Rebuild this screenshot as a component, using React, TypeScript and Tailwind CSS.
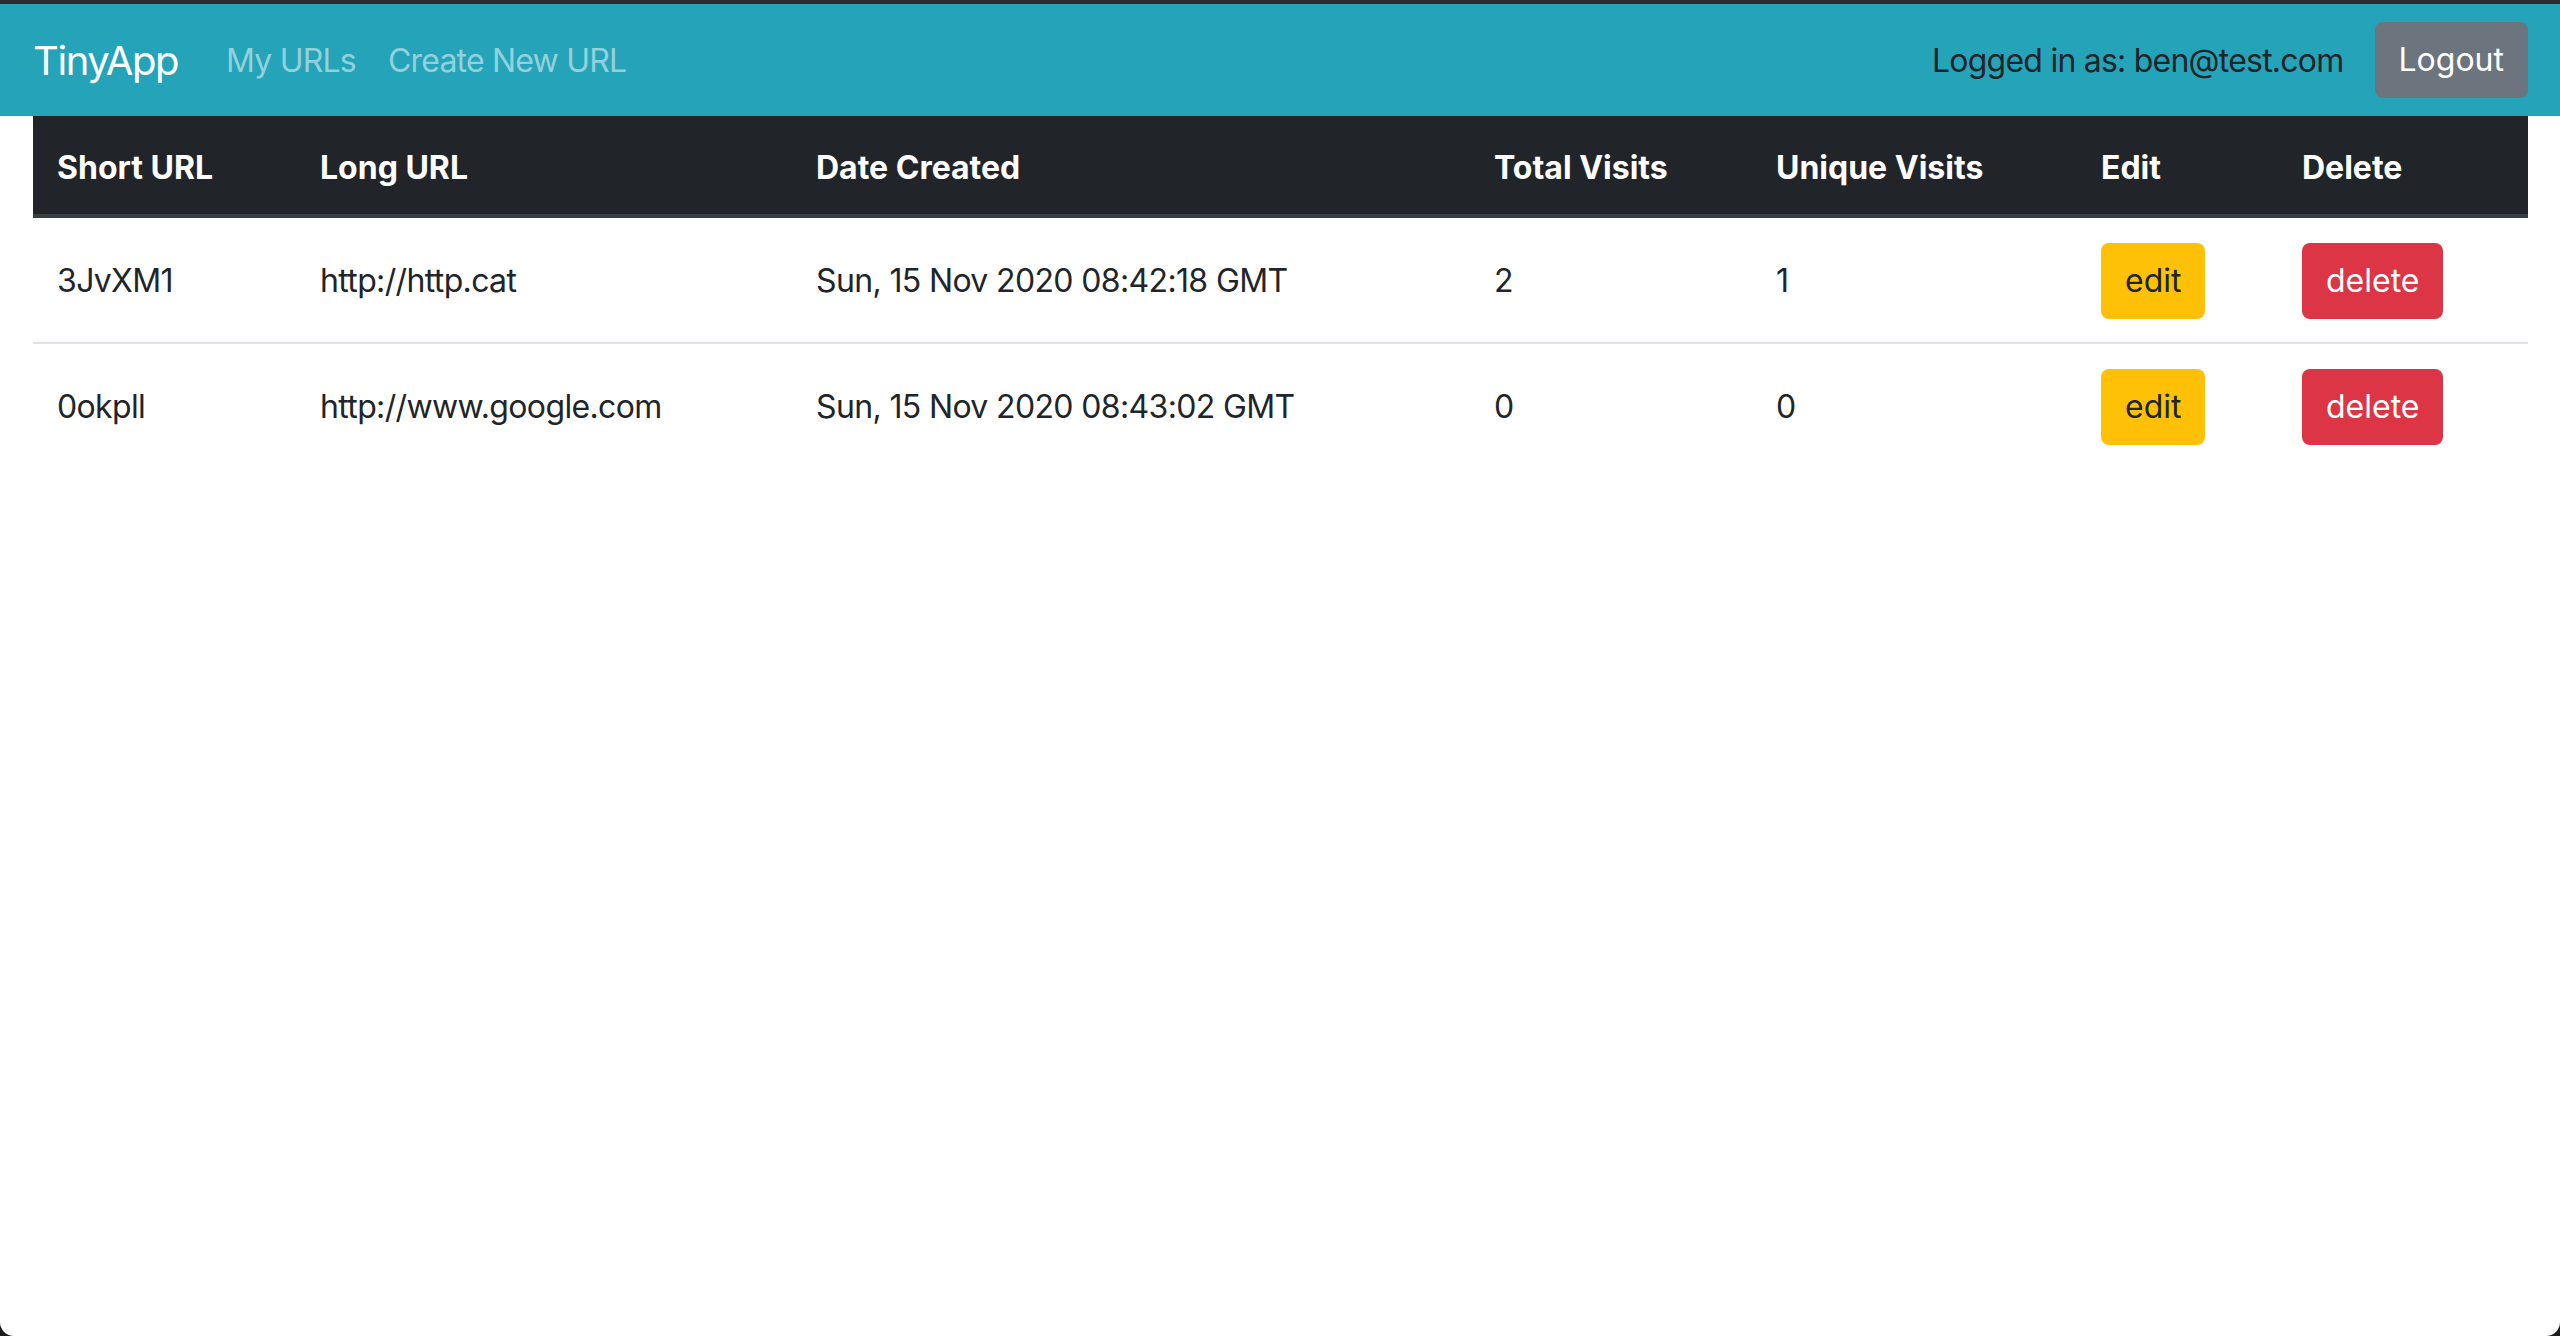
import React from "react";

const rows = [
  { short: "3JvXM1", long: "http://http.cat", date: "Sun, 15 Nov 2020 08:42:18 GMT", total: "2", unique: "1" },
  { short: "0okpll", long: "http://www.google.com", date: "Sun, 15 Nov 2020 08:43:02 GMT", total: "0", unique: "0" },
];

const widths = ["w-[263px]", "w-[496px]", "w-[678px]", "w-[282px]", "w-[325px]", "w-[201px]", "w-[250px]"];
const heads = ["Short URL", "Long URL", "Date Created", "Total Visits", "Unique Visits", "Edit", "Delete"];

export default function App() {
  return (
    <div className="h-[1336px] w-[2560px] bg-[#1c1c1e] overflow-hidden" style={{ fontFamily: "Inter, 'Liberation Sans', sans-serif" }}>
      <div className="h-full w-full bg-white rounded-b-[14px] overflow-hidden flex flex-col">
        <div className="h-[4px] bg-[#2b2b2b]" />
        <nav className="h-[112px] bg-[#25a3b9] flex items-center justify-between pl-[33px] pr-[32px] pt-[2px]">
          <div className="flex items-center">
            <span className="text-[40px] leading-[60px] text-white mr-[32px] tracking-[-0.035em]">TinyApp</span>
            <span className="text-[32px] leading-[48px] text-[#92d1dc] px-[16px] tracking-[-0.025em]">My URLs</span>
            <span className="text-[32px] leading-[48px] text-[#92d1dc] px-[16px] tracking-[-0.025em]">Create New URL</span>
          </div>
          <div className="flex items-center">
            <span className="text-[32px] leading-[48px] text-[#212529] mr-[31px] tracking-[-0.024em]">Logged in as: ben@test.com</span>
            <button className="h-[76px] px-[24px] rounded-[8px] bg-[#6c757d] text-white text-[32px] leading-[48px] -mt-[2px]">Logout</button>
          </div>
        </nav>
        <div className="pl-[33px] pr-[32px]">
          <table className="w-full table-fixed border-collapse text-[32px] leading-[48px] text-[#212529]">
            <colgroup>
              {widths.map((w, i) => (
                <col key={i} className={w} />
              ))}
            </colgroup>
            <thead>
              <tr className="bg-[#212529]">
                {heads.map((h) => (
                  <th key={h} className="text-left font-bold text-white px-[24px] pt-[26px] pb-[22px] border-t-[2px] border-t-[#212529] border-b-[4px] border-b-[#383d42]">
                    {h}
                  </th>
                ))}
              </tr>
            </thead>
            <tbody>
              {rows.map((r, i) => (
                <tr key={r.short} className={i > 0 ? "border-t-[2px] border-t-[#dee2e6]" : ""}>
                  <td className="px-[24px] pt-[25px] pb-[23px] align-middle tracking-[-0.02em]">{r.short}</td>
                  <td className="px-[24px] pt-[25px] pb-[23px] align-middle tracking-[-0.02em]">{r.long}</td>
                  <td className="px-[24px] pt-[25px] pb-[23px] align-middle tracking-[-0.02em]">{r.date}</td>
                  <td className="px-[24px] pt-[25px] pb-[23px] align-middle">{r.total}</td>
                  <td className="px-[24px] pt-[25px] pb-[23px] align-middle">{r.unique}</td>
                  <td className="px-[24px] pt-[25px] pb-[23px] align-middle">
                    <button className="h-[76px] px-[24px] rounded-[8px] bg-[#ffc107] text-[#212529] text-[32px] leading-[48px]">edit</button>
                  </td>
                  <td className="px-[24px] pt-[25px] pb-[23px] align-middle">
                    <button className="h-[76px] px-[24px] rounded-[8px] bg-[#dc3545] text-white text-[32px] leading-[48px]">delete</button>
                  </td>
                </tr>
              ))}
            </tbody>
          </table>
        </div>
      </div>
    </div>
  );
}
